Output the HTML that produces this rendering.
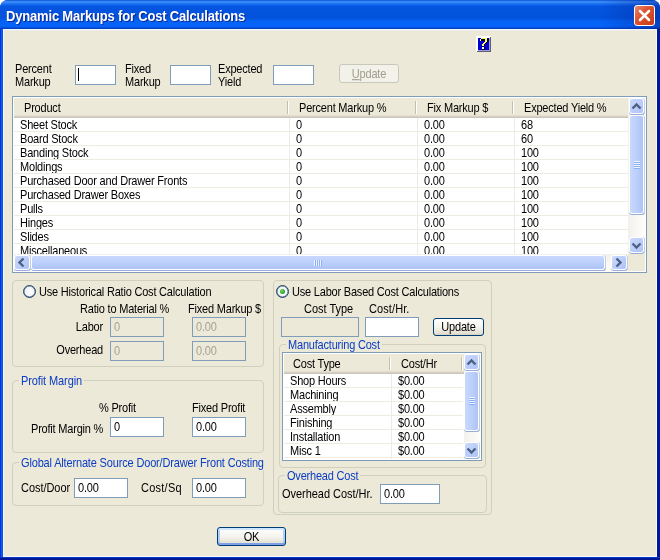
<!DOCTYPE html>
<html>
<head>
<meta charset="utf-8">
<title>Dynamic Markups for Cost Calculations</title>
<style>
html,body{margin:0;padding:0;}
body{width:660px;height:560px;overflow:hidden;background:#fff;font-family:"Liberation Sans",sans-serif;font-size:11px;color:#000;position:relative;letter-spacing:-0.2px;}
div,span{box-sizing:border-box;}
#root{position:absolute;left:0;top:0;width:660px;height:560px;overflow:hidden;will-change:transform;}
#win{position:absolute;left:0;top:0;width:660px;height:560px;background:#0831d9;overflow:hidden;border-radius:8px 8px 0 0;}
#title{position:absolute;left:0;top:0;width:660px;height:29px;
background:linear-gradient(to right,rgba(0,30,140,0) 0px,rgba(0,30,140,0) 600px,rgba(0,30,140,0.45) 660px),linear-gradient(to bottom,#0a50d2 0px,#3688f8 1.5px,#3386f8 2.5px,#1469ee 4.5px,#0455e0 6.5px,#0352dc 18px,#0562f4 21px,#0565fa 26px,#0553e0 27.5px,#0340c0 28.5px,#0340c0 29px);}
#title .t{position:absolute;left:6px;top:8px;font-weight:bold;font-size:13px;line-height:15px;color:#fff;white-space:nowrap;text-shadow:1px 1px 0 #0a2a9a;letter-spacing:-0.18px;transform:translateY(0.6px) scaleY(1.08);transform-origin:0 50%;}
#close{position:absolute;left:634px;top:5px;width:21px;height:21px;border:1px solid #fff;border-radius:3px;background:linear-gradient(135deg,#e9896f 0%,#dc5432 40%,#c93a14 100%);}
#lb{position:absolute;left:0;top:29px;width:3px;height:531px;background:linear-gradient(to right,#0734da 0px,#0734da 1px,#1160ec 1px,#1160ec 2px,#0b50e0 2px);}
#rb{position:absolute;left:657px;top:29px;width:3px;height:531px;background:#001796;}
#bb{position:absolute;left:0;top:557px;width:660px;height:3px;background:linear-gradient(to bottom,#0a35c4 0px,#0a35c4 1px,#001796 1px);}
#client{position:absolute;left:3px;top:29px;width:654px;height:528px;background:#ece9d8;border:1px solid #f4f8ff;box-shadow:inset 0 1px 0 #ebebe6;}
.l{position:absolute;white-space:nowrap;line-height:13px;font-size:11px;transform:scaleY(1.12);transform-origin:0 10px;}
.r{text-align:right;}
.blue{color:#0a3cc4;}
.in{position:absolute;background:#fff;border:1px solid #7f9db9;height:20px;font-size:11px;line-height:13px;padding:0;white-space:nowrap;}
.in .l{left:3px;top:3px;}
.btn .l{position:static;display:inline-block;}
.in.dis{background:#ece9d8;color:#a5a294;}
.gb{position:absolute;border:1px solid #d0d0bf;border-radius:4px;}
.lg{position:absolute;background:#ece9d8;padding:0 2px;white-space:nowrap;line-height:13px;color:#0a3cc4;transform:scaleY(1.12);transform-origin:0 10px;}
.btn{position:absolute;border:1px solid #003c74;border-radius:3px;background:linear-gradient(to bottom,#fff 0%,#f5f4ee 50%,#e3e0d2 90%,#d6d0c5 100%);text-align:center;font-size:11px;line-height:13px;}
.btn.dis{border-color:#c9c7ba;background:#f3f2ea;color:#a09d8c;}
.btn.def{box-shadow:inset 0 2px 0 #cee7ff,inset 0 -2px 0 #7f9fe6,inset 2px 0 0 #b4cdf4,inset -2px 0 0 #b4cdf4;}
.radio{position:absolute;width:13px;height:13px;border-radius:50%;border:1px solid #1d4068;box-shadow:inset 0 0 0 0.5px #5a7696;background:radial-gradient(circle at 60% 60%,#fdfeff 0%,#f2f5f8 50%,#dfe3e6 100%);}
.radio.on::after{content:"";position:absolute;left:3px;top:3px;width:5px;height:5px;border-radius:50%;background:radial-gradient(circle at 40% 40%,#6fdc5a,#21a121 70%);}
.grid{position:absolute;background:#fff;border:1px solid #7f9db9;overflow:hidden;}
.grid::after{content:"";position:absolute;left:0;top:0;right:0;bottom:0;border:1px solid #fff;pointer-events:none;}
.hdr{position:absolute;background:#ece9d8;border-bottom:1px solid #cbc7b8;box-shadow:inset 0 -1px 0 #d6d2c2, inset 0 -2px 0 #e2dfd0;}
.hl{position:absolute;background:#eeece2;}
.vl{position:absolute;background:#eeece2;}
.hd{position:absolute;background:#c2bfb1;box-shadow:1px 0 0 #fff;}
.sbv{position:absolute;background:linear-gradient(to right,#f3f1ec,#fdfdfb);}
.sbh{position:absolute;background:linear-gradient(to bottom,#f3f1ec,#fdfdfb);}
.corner{position:absolute;background:#ece9d8;}
.grip{position:absolute;}
.sbtn{position:absolute;border:1px solid #fff;border-radius:3px;background:linear-gradient(135deg,#cbd9fd,#b9ccf9 60%,#aec3f5);box-shadow:0 1px 0 #98add8,1px 0 0 #c0cdec,1px 1px 0 #a9bbe2;}
.sbtn svg{position:absolute;left:0;top:0;}
.thv{position:absolute;border:1px solid #fff;border-radius:3px;background:linear-gradient(to right,#c9d8fd,#bcd0fb 50%,#aec3f5);box-shadow:0 1px 0 #98add8,1px 0 0 #c0cdec,1px 1px 0 #a9bbe2;}
.thh{position:absolute;border:1px solid #fff;border-radius:3px;background:linear-gradient(to bottom,#c9d8fd,#bcd0fb 50%,#aec3f5);box-shadow:0 1px 0 #98add8,1px 0 0 #c0cdec,1px 1px 0 #a9bbe2;}
</style>
</head>
<body>
<div id="root">
<div id="win"><div id="title"><div class="t">Dynamic Markups for Cost Calculations</div></div>
<div id="close"><svg width="19" height="19" viewBox="0 0 19 19" style="position:absolute;left:0;top:0"><path d="M5 5 L14 14 M14 5 L5 14" stroke="#fff" stroke-width="2.5" stroke-linecap="round"/></svg></div>
<div id="lb"></div><div id="rb"></div><div id="bb"></div><div id="client"></div></div>
<svg width="15" height="16" viewBox="0 0 15 16" shape-rendering="crispEdges" style="position:absolute;left:476px;top:36px;"><rect x="0" y="0" width="15" height="16" fill="#606068"/><rect x="0" y="0" width="14" height="15" fill="#a0a0e0"/><path d="M0 0 H15 L13 2 H2 V14 L0 16 Z" fill="#ffffff"/><rect x="2" y="2" width="11" height="12" fill="#0000d0"/><rect x="5" y="2" width="1" height="1" fill="#ffff50"/><rect x="6" y="2" width="1" height="1" fill="#ffff50"/><rect x="7" y="2" width="1" height="1" fill="#ffff50"/><rect x="8" y="2" width="1" height="1" fill="#ffff50"/><rect x="9" y="2" width="1" height="1" fill="#ffff50"/><rect x="10" y="2" width="1" height="1" fill="#ffff50"/><rect x="4" y="3" width="1" height="1" fill="#ffffff"/><rect x="5" y="3" width="1" height="1" fill="#000020"/><rect x="6" y="3" width="1" height="1" fill="#000020"/><rect x="7" y="3" width="1" height="1" fill="#000020"/><rect x="8" y="3" width="1" height="1" fill="#000020"/><rect x="9" y="3" width="1" height="1" fill="#ffff50"/><rect x="10" y="3" width="1" height="1" fill="#ffff50"/><rect x="11" y="3" width="1" height="1" fill="#000020"/><rect x="12" y="3" width="1" height="1" fill="#000020"/><rect x="4" y="4" width="1" height="1" fill="#ffffff"/><rect x="5" y="4" width="1" height="1" fill="#000020"/><rect x="6" y="4" width="1" height="1" fill="#000020"/><rect x="7" y="4" width="1" height="1" fill="#000020"/><rect x="8" y="4" width="1" height="1" fill="#000020"/><rect x="9" y="4" width="1" height="1" fill="#ffff50"/><rect x="10" y="4" width="1" height="1" fill="#ffff50"/><rect x="11" y="4" width="1" height="1" fill="#000020"/><rect x="12" y="4" width="1" height="1" fill="#000020"/><rect x="9" y="5" width="1" height="1" fill="#ffff50"/><rect x="10" y="5" width="1" height="1" fill="#ffff50"/><rect x="11" y="5" width="1" height="1" fill="#000020"/><rect x="8" y="6" width="1" height="1" fill="#ffff50"/><rect x="9" y="6" width="1" height="1" fill="#ffff50"/><rect x="10" y="6" width="1" height="1" fill="#000020"/><rect x="7" y="7" width="1" height="1" fill="#ffff50"/><rect x="8" y="7" width="1" height="1" fill="#ffff50"/><rect x="9" y="7" width="1" height="1" fill="#000020"/><rect x="6" y="8" width="1" height="1" fill="#ffff50"/><rect x="7" y="8" width="1" height="1" fill="#ffff50"/><rect x="8" y="8" width="1" height="1" fill="#000020"/><rect x="6" y="9" width="1" height="1" fill="#ffffa0"/><rect x="7" y="9" width="1" height="1" fill="#ffffa0"/><rect x="8" y="9" width="1" height="1" fill="#000020"/><rect x="6" y="10" width="1" height="1" fill="#000020"/><rect x="7" y="10" width="1" height="1" fill="#000020"/><rect x="6" y="11" width="1" height="1" fill="#ffffff"/><rect x="7" y="11" width="1" height="1" fill="#ffffff"/><rect x="8" y="11" width="1" height="1" fill="#000020"/><rect x="6" y="12" width="1" height="1" fill="#ffffff"/><rect x="7" y="12" width="1" height="1" fill="#ffffff"/><rect x="8" y="12" width="1" height="1" fill="#000020"/><rect x="6" y="13" width="1" height="1" fill="#000020"/><rect x="7" y="13" width="1" height="1" fill="#000020"/><rect x="8" y="13" width="1" height="1" fill="#000020"/></svg>
<div class="l " style="left:15px;top:63px;">Percent</div>
<div class="l " style="left:15px;top:76px;">Markup</div>
<div class="in" style="left:75px;top:65px;width:41px;"></div>
<div style="position:absolute;left:78px;top:68px;width:1px;height:13px;background:#000;"></div>
<div class="l " style="left:125px;top:63px;">Fixed</div>
<div class="l " style="left:125px;top:76px;">Markup</div>
<div class="in" style="left:170px;top:65px;width:41px;"></div>
<div class="l " style="left:218px;top:63px;">Expected</div>
<div class="l " style="left:218px;top:76px;">Yield</div>
<div class="in" style="left:273px;top:65px;width:41px;"></div>
<div class="btn dis" style="left:339px;top:64px;width:60px;height:19px;padding-top:3px;"><span class="l"><u>U</u>pdate</span></div>
<div class="grid" style="left:12px;top:96px;width:635px;height:177px;">
<div class="hdr" style="left:1px;top:1px;width:614px;height:20px;"></div>
<div class="hd" style="left:274px;top:4px;width:1px;height:13px;"></div>
<div class="hd" style="left:402px;top:4px;width:1px;height:13px;"></div>
<div class="hd" style="left:499px;top:4px;width:1px;height:13px;"></div>
<div class="l " style="left:11px;top:5px;">Product</div>
<div class="l " style="left:286px;top:5px;">Percent Markup %</div>
<div class="l " style="left:414px;top:5px;">Fix Markup $</div>
<div class="l " style="left:511px;top:5px;">Expected Yield %</div>
<div class="l " style="left:7px;top:22px;">Sheet Stock</div>
<div class="l " style="left:283px;top:22px;">0</div>
<div class="l " style="left:411px;top:22px;">0.00</div>
<div class="l " style="left:508px;top:22px;">68</div>
<div class="hl" style="left:1px;top:34px;width:614px;height:1px;"></div>
<div class="l " style="left:7px;top:36px;">Board Stock</div>
<div class="l " style="left:283px;top:36px;">0</div>
<div class="l " style="left:411px;top:36px;">0.00</div>
<div class="l " style="left:508px;top:36px;">60</div>
<div class="hl" style="left:1px;top:48px;width:614px;height:1px;"></div>
<div class="l " style="left:7px;top:50px;">Banding Stock</div>
<div class="l " style="left:283px;top:50px;">0</div>
<div class="l " style="left:411px;top:50px;">0.00</div>
<div class="l " style="left:508px;top:50px;">100</div>
<div class="hl" style="left:1px;top:62px;width:614px;height:1px;"></div>
<div class="l " style="left:7px;top:64px;">Moldings</div>
<div class="l " style="left:283px;top:64px;">0</div>
<div class="l " style="left:411px;top:64px;">0.00</div>
<div class="l " style="left:508px;top:64px;">100</div>
<div class="hl" style="left:1px;top:76px;width:614px;height:1px;"></div>
<div class="l " style="left:7px;top:78px;">Purchased Door and Drawer Fronts</div>
<div class="l " style="left:283px;top:78px;">0</div>
<div class="l " style="left:411px;top:78px;">0.00</div>
<div class="l " style="left:508px;top:78px;">100</div>
<div class="hl" style="left:1px;top:90px;width:614px;height:1px;"></div>
<div class="l " style="left:7px;top:92px;">Purchased Drawer Boxes</div>
<div class="l " style="left:283px;top:92px;">0</div>
<div class="l " style="left:411px;top:92px;">0.00</div>
<div class="l " style="left:508px;top:92px;">100</div>
<div class="hl" style="left:1px;top:104px;width:614px;height:1px;"></div>
<div class="l " style="left:7px;top:106px;">Pulls</div>
<div class="l " style="left:283px;top:106px;">0</div>
<div class="l " style="left:411px;top:106px;">0.00</div>
<div class="l " style="left:508px;top:106px;">100</div>
<div class="hl" style="left:1px;top:118px;width:614px;height:1px;"></div>
<div class="l " style="left:7px;top:120px;">Hinges</div>
<div class="l " style="left:283px;top:120px;">0</div>
<div class="l " style="left:411px;top:120px;">0.00</div>
<div class="l " style="left:508px;top:120px;">100</div>
<div class="hl" style="left:1px;top:132px;width:614px;height:1px;"></div>
<div class="l " style="left:7px;top:134px;">Slides</div>
<div class="l " style="left:283px;top:134px;">0</div>
<div class="l " style="left:411px;top:134px;">0.00</div>
<div class="l " style="left:508px;top:134px;">100</div>
<div class="hl" style="left:1px;top:146px;width:614px;height:1px;"></div>
<div class="l " style="left:7px;top:148px;">Miscellaneous</div>
<div class="l " style="left:283px;top:148px;">0</div>
<div class="l " style="left:411px;top:148px;">0.00</div>
<div class="l " style="left:508px;top:148px;">100</div>
<div class="hl" style="left:1px;top:160px;width:614px;height:1px;"></div>
<div class="vl" style="left:276px;top:21px;width:1px;height:136px;"></div>
<div class="vl" style="left:404px;top:21px;width:1px;height:136px;"></div>
<div class="vl" style="left:501px;top:21px;width:1px;height:136px;"></div>
<div class="sbv" style="left:615px;top:1px;width:17px;height:156px;"></div>
<div class="sbtn" style="left:616px;top:1px;width:15px;height:16px;"><svg style="top:1px" width="13" height="13" viewBox="0 0 13 13"><path d="M2.5 8.5 L6.5 4.5 L10.5 8.5" fill="none" stroke="#4d6185" stroke-width="2.4" stroke-linejoin="miter"/></svg></div>
<div class="thv" style="left:616px;top:18px;width:15px;height:99px;"><div class="grip" style="left:4px;top:50%;margin-top:-4px;width:6px;height:8px;background:repeating-linear-gradient(to bottom,#eef4fe 0,#eef4fe 1px,#8cb0f8 1px,#8cb0f8 2px);"></div></div>
<div class="sbtn" style="left:616px;top:140px;width:15px;height:16px;"><svg style="top:1px" width="13" height="13" viewBox="0 0 13 13"><path d="M2.5 4.5 L6.5 8.5 L10.5 4.5" fill="none" stroke="#4d6185" stroke-width="2.4" stroke-linejoin="miter"/></svg></div>
<div class="sbh" style="left:1px;top:157px;width:614px;height:17px;"></div>
<div class="sbtn" style="left:1px;top:158px;width:16px;height:15px;"><svg  width="13" height="13" viewBox="0 0 13 13"><path d="M8.5 2.5 L4.5 6.5 L8.5 10.5" fill="none" stroke="#4d6185" stroke-width="2.4" stroke-linejoin="miter"/></svg></div>
<div class="thh" style="left:18px;top:158px;width:574px;height:15px;"><div class="grip" style="top:4px;left:50%;margin-left:-4px;height:6px;width:8px;background:repeating-linear-gradient(to right,#eef4fe 0,#eef4fe 1px,#8cb0f8 1px,#8cb0f8 2px);"></div></div>
<div class="sbtn" style="left:598px;top:158px;width:16px;height:15px;"><svg  width="13" height="13" viewBox="0 0 13 13"><path d="M4.5 2.5 L8.5 6.5 L4.5 10.5" fill="none" stroke="#4d6185" stroke-width="2.4" stroke-linejoin="miter"/></svg></div>
<div class="corner" style="left:615px;top:157px;width:17px;height:17px;"></div>
</div>
<div class="gb" style="left:12px;top:280px;width:252px;height:87px;"></div>
<div class="radio" style="left:23px;top:285px;"></div>
<div class="l " style="left:39px;top:286px;">Use Historical Ratio Cost Calculation</div>
<div class="l " style="left:80px;top:303px;">Ratio to Material %</div>
<div class="l " style="left:188px;top:303px;">Fixed Markup $</div>
<div class="l r" style="right:557px;top:321px;">Labor</div>
<div class="in dis" style="left:110px;top:317px;width:54px;"><span class=l>0</span></div>
<div class="in dis" style="left:192px;top:317px;width:54px;"><span class=l>0.00</span></div>
<div class="l r" style="right:557px;top:344px;">Overhead</div>
<div class="in dis" style="left:110px;top:341px;width:54px;"><span class=l>0</span></div>
<div class="in dis" style="left:192px;top:341px;width:54px;"><span class=l>0.00</span></div>
<div class="gb" style="left:12px;top:380px;width:252px;height:73px;"></div>
<div class="lg" style="left:19px;top:375px;letter-spacing:-0.1px;">Profit Margin</div>
<div class="l " style="left:99px;top:402px;">% Profit</div>
<div class="l " style="left:192px;top:402px;">Fixed Profit</div>
<div class="l " style="left:31px;top:423px;">Profit Margin %</div>
<div class="in" style="left:110px;top:417px;width:54px;"><span class=l>0</span></div>
<div class="in" style="left:192px;top:417px;width:54px;"><span class=l>0.00</span></div>
<div class="gb" style="left:12px;top:462px;width:252px;height:44px;"></div>
<div class="lg" style="left:19px;top:457px;letter-spacing:-0.16px;">Global Alternate Source Door/Drawer Front Costing</div>
<div class="l " style="left:21px;top:482px;letter-spacing:-0.05px;">Cost/Door</div>
<div class="in" style="left:74px;top:478px;width:54px;"><span class=l>0.00</span></div>
<div class="l " style="left:141px;top:482px;letter-spacing:0.25px;">Cost/Sq</div>
<div class="in" style="left:192px;top:478px;width:54px;"><span class=l>0.00</span></div>
<div class="gb" style="left:273px;top:280px;width:219px;height:235px;"></div>
<div class="radio on" style="left:276px;top:285px;"></div>
<div class="l " style="left:292px;top:286px;">Use Labor Based Cost Calculations</div>
<div class="l " style="left:304px;top:303px;letter-spacing:-0.02px;">Cost Type</div>
<div class="l " style="left:369px;top:303px;letter-spacing:0.1px;">Cost/Hr.</div>
<div class="in dis" style="left:281px;top:317px;width:78px;"></div>
<div class="in" style="left:365px;top:317px;width:54px;"></div>
<div class="btn" style="left:433px;top:318px;width:51px;height:18px;padding-top:2px;"><span class="l">Update</span></div>
<div class="gb" style="left:279px;top:344px;width:207px;height:124px;"></div>
<div class="lg" style="left:286px;top:339px;">Manufacturing Cost</div>
<div class="grid" style="left:282px;top:352px;width:200px;height:109px;">
<div class="hdr" style="left:1px;top:1px;width:180px;height:20px;"></div>
<div class="hd" style="left:106px;top:4px;width:1px;height:13px;"></div>
<div class="hd" style="left:178px;top:4px;width:1px;height:13px;"></div>
<div class="l " style="left:10px;top:5px;">Cost Type</div>
<div class="l " style="left:118px;top:5px;">Cost/Hr</div>
<div class="l " style="left:7px;top:22px;">Shop Hours</div>
<div class="l " style="left:115px;top:22px;">$0.00</div>
<div class="hl" style="left:1px;top:34px;width:179px;height:1px;"></div>
<div class="l " style="left:7px;top:36px;">Machining</div>
<div class="l " style="left:115px;top:36px;">$0.00</div>
<div class="hl" style="left:1px;top:48px;width:179px;height:1px;"></div>
<div class="l " style="left:7px;top:50px;">Assembly</div>
<div class="l " style="left:115px;top:50px;">$0.00</div>
<div class="hl" style="left:1px;top:62px;width:179px;height:1px;"></div>
<div class="l " style="left:7px;top:64px;">Finishing</div>
<div class="l " style="left:115px;top:64px;">$0.00</div>
<div class="hl" style="left:1px;top:76px;width:179px;height:1px;"></div>
<div class="l " style="left:7px;top:78px;">Installation</div>
<div class="l " style="left:115px;top:78px;">$0.00</div>
<div class="hl" style="left:1px;top:90px;width:179px;height:1px;"></div>
<div class="l " style="left:7px;top:92px;">Misc 1</div>
<div class="l " style="left:115px;top:92px;">$0.00</div>
<div class="hl" style="left:1px;top:104px;width:179px;height:1px;"></div>
<div class="vl" style="left:108px;top:21px;width:1px;height:85px;"></div>
<div class="sbv" style="left:181px;top:1px;width:16px;height:105px;"></div>
<div class="sbtn" style="left:181px;top:1px;width:15px;height:16px;"><svg style="top:1px" width="13" height="13" viewBox="0 0 13 13"><path d="M2.5 8.5 L6.5 4.5 L10.5 8.5" fill="none" stroke="#4d6185" stroke-width="2.4" stroke-linejoin="miter"/></svg></div>
<div class="thv" style="left:181px;top:18px;width:15px;height:60px;"><div class="grip" style="left:4px;top:50%;margin-top:-4px;width:6px;height:8px;background:repeating-linear-gradient(to bottom,#eef4fe 0,#eef4fe 1px,#8cb0f8 1px,#8cb0f8 2px);"></div></div>
<div class="sbtn" style="left:181px;top:89px;width:15px;height:16px;"><svg style="top:1px" width="13" height="13" viewBox="0 0 13 13"><path d="M2.5 4.5 L6.5 8.5 L10.5 4.5" fill="none" stroke="#4d6185" stroke-width="2.4" stroke-linejoin="miter"/></svg></div>
</div>
<div class="gb" style="left:278px;top:475px;width:209px;height:38px;"></div>
<div class="lg" style="left:285px;top:470px;">Overhead Cost</div>
<div class="l " style="left:282px;top:488px;letter-spacing:-0.04px;">Overhead Cost/Hr.</div>
<div class="in" style="left:380px;top:484px;width:60px;"><span class=l>0.00</span></div>
<div class="btn def" style="left:217px;top:527px;width:69px;height:19px;padding-top:3px;"><span class="l">OK</span></div>
</div>
</body>
</html>
